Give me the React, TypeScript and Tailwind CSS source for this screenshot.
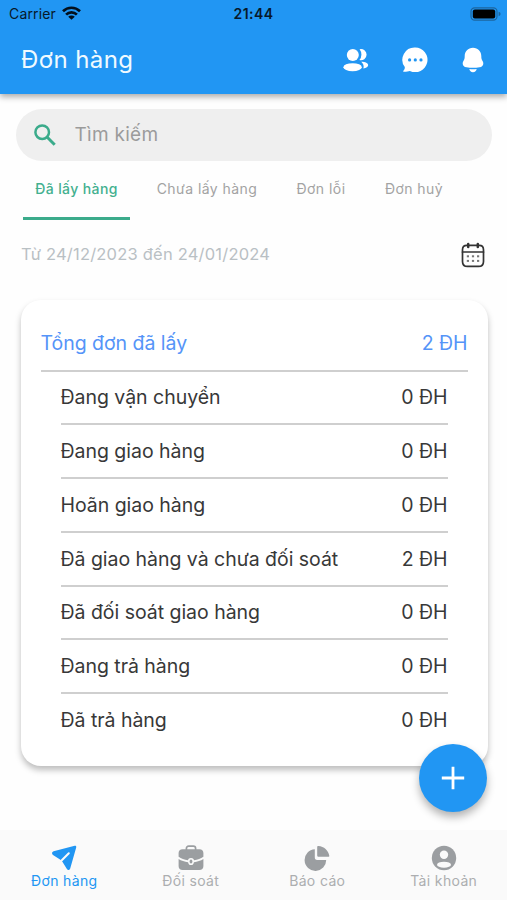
import type { ReactNode } from "react";
import clsx from "clsx";

const tabs = [
  { label: "Đã lấy hàng", box: "w-[107px]", active: true },
  { label: "Chưa lấy hàng", box: "w-[154px]" },
  { label: "Đơn lỗi", box: "w-[74px]" },
  { label: "Đơn huỷ", box: "w-[112px]" },
];

const rows = [
  { label: "Đang vận chuyển", count: 0 },
  { label: "Đang giao hàng", count: 0 },
  { label: "Hoãn giao hàng", count: 0 },
  { label: "Đã giao hàng và chưa đối soát", count: 2 },
  { label: "Đã đối soát giao hàng", count: 0 },
  { label: "Đang trả hàng", count: 0 },
  { label: "Đã trả hàng", count: 0 },
];

function StatusBar() {
  return (
    <div className="relative flex h-[27px] items-center justify-between pl-[9px] pr-[6px] text-[#07192a]">
      <div className="flex items-center gap-[6px]">
        <span className="text-[14px] tracking-[0.15px]">Carrier</span>
        <svg className="mb-[2px] h-[14px] w-[19px]" viewBox="0 0 19 14" fill="none" stroke="#03101d" strokeWidth="2.7">
          <path d="M1 5.2a12.2 12.2 0 0 1 17 0" />
          <path d="M4.1 8.6a7.7 7.7 0 0 1 10.8 0" />
          <path d="M9.5 13.8 6.2 10.8a4.7 4.7 0 0 1 6.6 0z" fill="#03101d" stroke="none" />
        </svg>
      </div>
      <span className="absolute inset-x-0 text-center text-[14px] font-semibold tracking-[0.4px]">21:44</span>
      <svg className="h-[14px] w-[31px]" viewBox="0 0 31 14">
        <rect x="1" y="0.8" width="26" height="12.4" rx="3.6" fill="none" stroke="#1c659f" strokeWidth="1.2" />
        <rect x="2.8" y="2.6" width="22.4" height="8.8" rx="2" fill="#000" />
        <path d="M28.6 4.8q2 .6 2 2.2t-2 2.2z" fill="#1c659f" />
      </svg>
    </div>
  );
}

function UsersIcon() {
  return (
    <svg className="h-6 w-[26px]" viewBox="0 0 26 24" fill="#fff">
      <circle cx="9.8" cy="6.9" r="6" />
      <ellipse cx="9.6" cy="19.2" rx="9.2" ry="4" />
      <path d="M16.6 1.200a5.600 5.600 0 1 1-.2 10.800 8.600 8.600 0 0 0 .2-10.800z" />
      <path d="M18.200 13.700c4.200 0 7 1.400 7 3.400 0 1.900-2 3.200-4.800 3.400.8-2.700-.2-5.100-2.200-6.800z" />
    </svg>
  );
}

function ChatIcon() {
  return (
    <svg className="h-[26px] w-[26px]" viewBox="0 0 26 26">
      <path
        d="M13.300 .5a12.300 12.300 0 1 1-5.400 23.400c-1.500.5-4 .9-6.200.8-.6 0-.8-.5-.4-.9 1-1 1.600-2.200 1.500-3.700A12.300 12.300 0 0 1 13.300 .5z"
        fill="#fff"
      />
      <g fill="#2196f3">
        <circle cx="7.6" cy="12.9" r="1.6" />
        <circle cx="13.3" cy="12.9" r="1.6" />
        <circle cx="19" cy="12.9" r="1.6" />
      </g>
    </svg>
  );
}

function BellIcon() {
  return (
    <svg className="h-[26px] w-[22px]" viewBox="0 0 22 26" fill="#fff">
      <path d="M11 .7c5 0 8.300 3.700 8.300 8.300 0 2.700.3 3.500 1.400 5.300 1.600 2.800-.2 5.500-3.200 6-4.200.7-8.800.7-13 0-3-.5-4.800-3.200-3.200-6C2.400 12.500 2.700 11.700 2.700 9 2.700 4.400 6 .7 11 .7z" />
      <path d="M7.300 22.100c2.400.3 5 .3 7.400 0-.3 1.900-1.700 3.100-3.700 3.100s-3.400-1.200-3.700-3.100z" />
    </svg>
  );
}

function CalendarIcon() {
  return (
    <svg className="h-[26px] w-6" viewBox="0 0 24 26" fill="none" stroke="#333" strokeWidth="1.7" strokeLinecap="round">
      <path d="M5.800 3.400h12.400c2.600 0 4.300 1.700 4.300 4.300v11.700c0 3.200-1.800 5-5 5h-11c-3.200 0-5-1.800-5-5V7.700c0-2.600 1.700-4.300 4.300-4.300z" />
      <path d="M1.500 10h21" />
      <path d="M7.200 1.900v3.200M16.800 1.900v3.200" strokeWidth="2.500" />
      <g fill="#777" stroke="none">
        <rect x="5.800" y="13.300" width="2.200" height="2" />
        <rect x="10.900" y="13.300" width="2.200" height="2" />
        <rect x="16" y="13.300" width="2.200" height="2" />
        <rect x="5.800" y="17.900" width="2.200" height="2" />
        <rect x="10.900" y="17.900" width="2.200" height="2" />
        <rect x="16" y="17.900" width="2.200" height="2" />
      </g>
    </svg>
  );
}

function SendIcon() {
  return (
    <svg className="h-[26px] w-[26px]" viewBox="0 0 26 26">
      <path
        d="M23.700 .8c1.200-.2 1.800.5 1.500 1.600l-6 21c-.5 1.700-2.400 2-3.300.6l-5.300-8.500L2 9.900C.5 8.900.8 6.800 2.600 6.300z"
        fill="#2196f3"
      />
      <path d="m10.800 15.300 7-7" stroke="#fafafa" strokeWidth="2" strokeLinecap="round" />
    </svg>
  );
}

function BriefcaseIcon() {
  return (
    <svg className="h-[26px] w-[26px]" viewBox="0 0 26 26" fill="#9b9ea1">
      <path d="M8.400 5V3.500c0-1.400.9-2.300 2.300-2.300h4.600c1.400 0 2.300.9 2.300 2.300V5" fill="none" stroke="#9b9ea1" strokeWidth="1.700" />
      <path d="M4.500 4.200h17c2.400 0 3.900 1.500 3.900 3.900v3.600c-2.600 1.900-5.800 3-9.400 3.500-.3-1.300-1.400-2.200-3-2.200s-2.700.9-3 2.200c-3.600-.5-6.800-1.600-9.400-3.500V8.100c0-2.400 1.500-3.900 3.900-3.900z" />
      <path d="M.6 14c2.700 1.700 6 2.700 9.500 3.200.3 1.900 1.300 2.900 2.900 2.900s2.600-1 2.900-2.900c3.500-.5 6.800-1.500 9.500-3.200v7.100c0 2.500-1.500 4-4 4H4.600c-2.500 0-4-1.500-4-4z" />
      <ellipse cx="13" cy="16.500" rx="2.300" ry="2.900" fill="#fafafa" />
      <ellipse cx="13" cy="16.500" rx="1.400" ry="1.900" />
    </svg>
  );
}

function PieIcon() {
  return (
    <svg className="h-[26px] w-[26px]" viewBox="0 0 26 26" fill="#9b9ea1">
      <path d="M10.800 4.300v8.200c0 1.700.7 2.400 2.400 2.400h9A10.800 10.800 0 1 1 10.800 4.300z" />
      <path d="M13.200 2c0-.8.5-1.200 1.200-1.100 5.700.5 9.900 4.300 10.900 9.800.1.700-.3 1.100-1 1.100h-9.500c-1 0-1.600-.6-1.600-1.600z" />
    </svg>
  );
}

function AccountIcon() {
  return (
    <svg className="h-[26px] w-[26px]" viewBox="0 0 26 26">
      <circle cx="13" cy="13" r="12.200" fill="#9b9ea1" />
      <circle cx="13" cy="9.800" r="4.200" fill="#fafafa" />
      <ellipse cx="13" cy="19.700" rx="7" ry="3" fill="#fafafa" />
    </svg>
  );
}

function NavItem({ icon, label, active }: { icon: ReactNode; label: string; active?: boolean }) {
  return (
    <div className={clsx("flex flex-1 flex-col items-center pt-[15px]", active ? "text-[#2196f3]" : "text-[#acaeb0]")}>
      {icon}
      <span className="text-[14px] leading-[19px] tracking-[0.35px]">{label}</span>
    </div>
  );
}

export default function App() {
  return (
    <div className="relative flex h-[900px] w-[507px] flex-col overflow-hidden bg-[#fefefe] font-[Inter,'Noto_Sans',sans-serif]">
      {/* App bar */}
      <header className="h-[94px] shrink-0 bg-[#2196f3] shadow-[0_3px_6px_rgba(0,0,0,0.32)]">
        <StatusBar />
        <div className="flex h-[66px] items-center justify-between pl-[21px] pr-[23px]">
          <h1 className="text-[24px] tracking-[0.4px] text-[#f0faff]">Đơn hàng</h1>
          <div className="flex items-center">
            <UsersIcon />
            <span className="ml-[33px] mr-[34px]">
              <ChatIcon />
            </span>
            <BellIcon />
          </div>
        </div>
      </header>

      {/* Search */}
      <div className="mx-[15.5px] mt-[15px] flex h-[51.5px] shrink-0 items-center rounded-full bg-[#efefef] pl-[18px]">
        <svg className="h-[22px] w-[22px]" viewBox="0 0 22 22" fill="none" stroke="#3bab8b" strokeWidth="2.5">
          <circle cx="8.200" cy="8.200" r="6.800" />
          <path d="m13 13 7.700 7.700" strokeWidth="3" />
        </svg>
        <span className="ml-[19px] text-[19px] tracking-[0.28px] text-[#9b9b9b]">Tìm kiếm</span>
      </div>

      {/* Tabs */}
      <nav className="flex h-[59px] shrink-0 pl-[23px] text-[14px] tracking-[0.45px] text-[#a3a3a3]">
        {tabs.map((tab) => (
          <div
            key={tab.label}
            className={clsx(
              "flex items-center justify-center whitespace-nowrap border-b-[3px] pb-px",
              tab.box,
              tab.active ? "border-[#3bab8b] font-medium tracking-[0.4px] text-[#43b08f]" : "border-transparent",
            )}
          >
            {tab.label}
          </div>
        ))}
      </nav>

      {/* Date range */}
      <div className="flex h-[70px] shrink-0 items-center justify-between pl-[21px] pr-[22px]">
        <span className="text-[16.5px] tracking-[0.21px] text-[#b9c0c4]">Từ 24/12/2023 đến 24/01/2024</span>
        <CalendarIcon />
      </div>

      {/* Summary card */}
      <section className="ml-[20.5px] mr-[19.5px] mt-[10px] h-[466px] shrink-0 rounded-[20px] bg-white px-5 pt-[16px] text-[19.5px] tracking-[-0.03px] text-[#383838] shadow-[0_4px_6px_rgba(0,0,0,0.26)]">
        <div className="flex h-[56px] items-center justify-between border-b-2 border-[#cfcfcf] pt-[3px] text-[#5594f8]">
          <span>Tổng đơn đã lấy</span>
          <span>2 ĐH</span>
        </div>
        <div className="px-5">
          {rows.map((row) => (
            <div
              key={row.label}
              className="flex h-[53.75px] items-center justify-between border-b-2 border-[#cfcfcf] pt-px last:border-transparent"
            >
              <span>{row.label}</span>
              <span>{row.count} ĐH</span>
            </div>
          ))}
        </div>
      </section>

      {/* Floating action button */}
      <button className="absolute left-[419px] top-[744px] flex h-[68px] w-[68px] items-center justify-center rounded-full bg-[#2196f3] shadow-[0_5px_9px_rgba(0,0,0,0.3)]">
        <svg className="h-6 w-6" viewBox="0 0 24 24" stroke="#fff" strokeWidth="2.8">
          <path d="M12 .8v22.400M.8 12h22.400" />
        </svg>
      </button>

      {/* Bottom navigation */}
      <footer className="mt-auto flex h-[70px] shrink-0 bg-[#fafafa] pl-px">
        <NavItem icon={<SendIcon />} label="Đơn hàng" active />
        <NavItem icon={<BriefcaseIcon />} label="Đối soát" />
        <NavItem icon={<PieIcon />} label="Báo cáo" />
        <NavItem icon={<AccountIcon />} label="Tài khoản" />
      </footer>
    </div>
  );
}
